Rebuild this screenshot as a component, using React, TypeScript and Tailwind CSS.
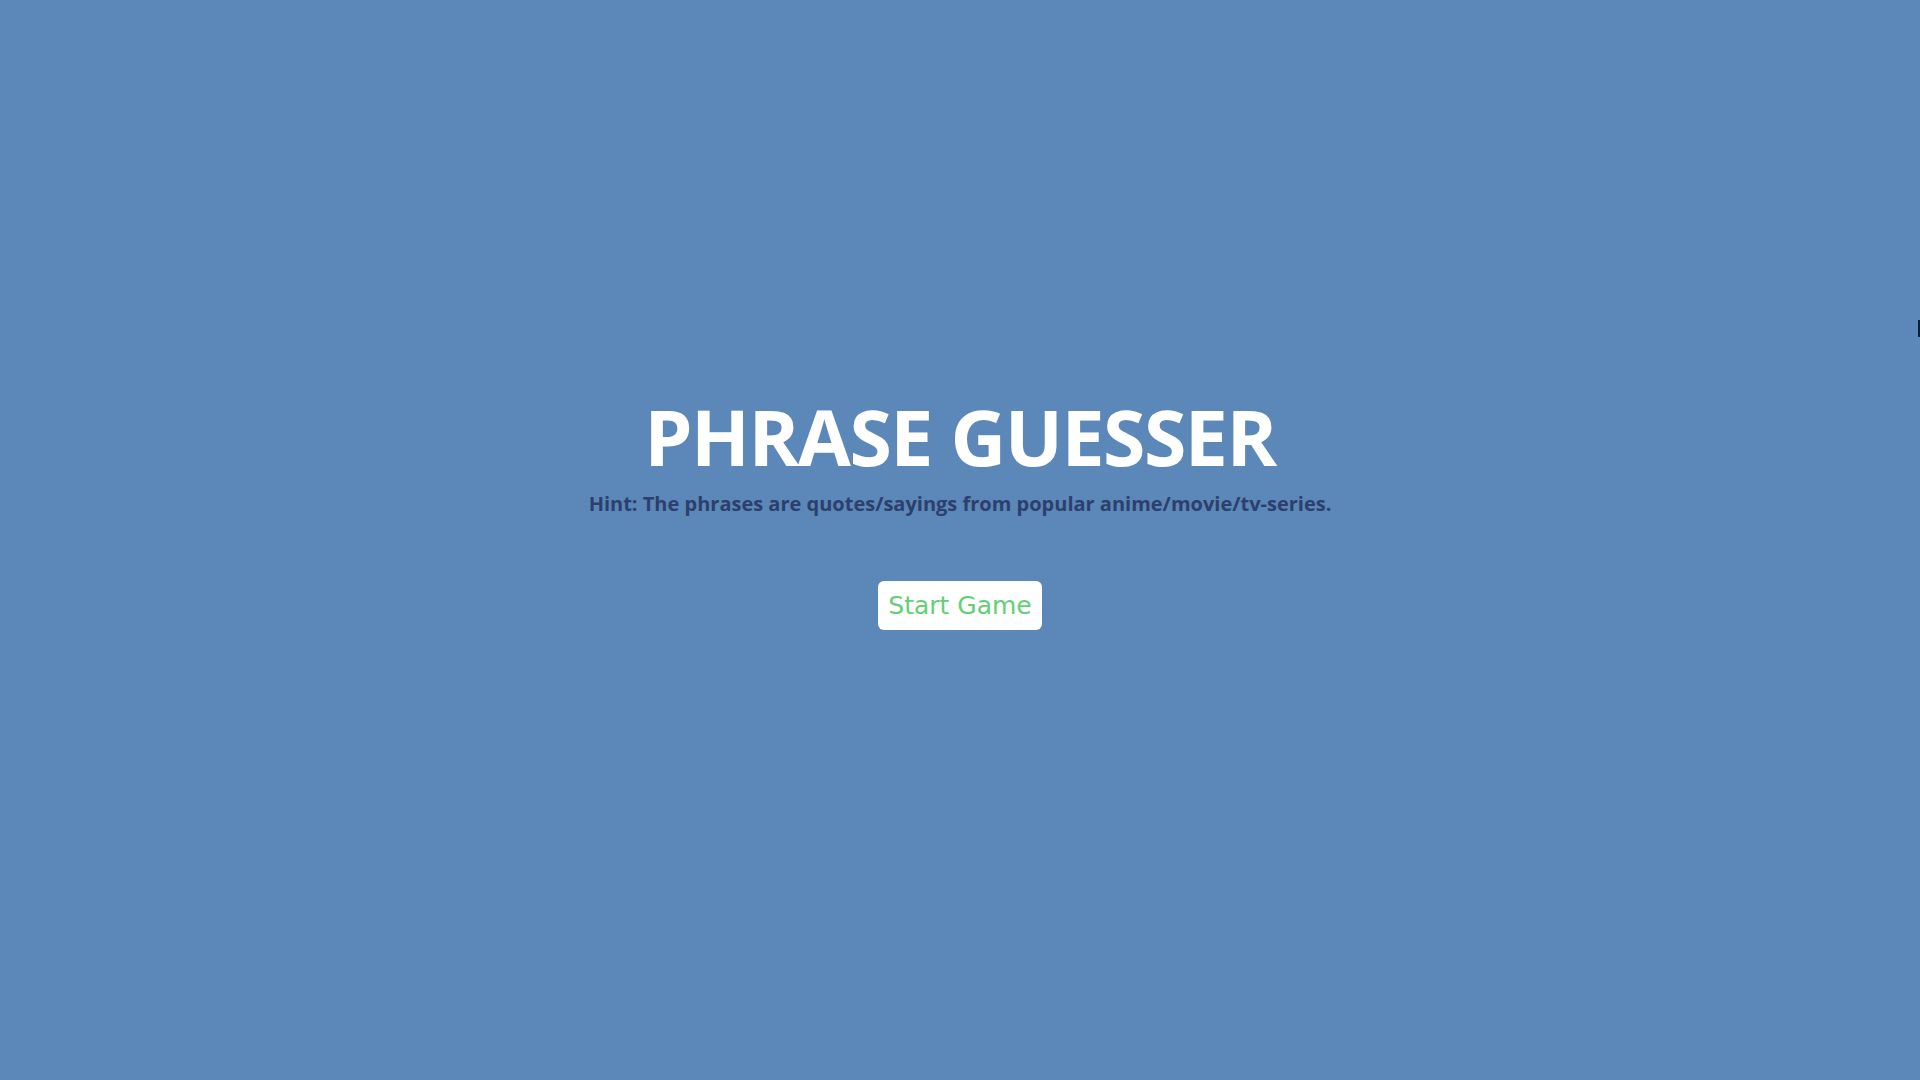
export default function App() {
  return (
    <div className="relative flex h-screen w-full flex-col items-center justify-center bg-[#5b87b9] font-['Open_Sans',sans-serif]">
      <h1 className="m-0 text-[77px] font-bold leading-normal tracking-[-1.5px] text-white">PHRASE GUESSER</h1>
      <p className="m-0 -mt-[6px] text-[20px] font-bold leading-normal text-[#2c3f6d]">
        Hint: The phrases are quotes/sayings from popular anime/movie/tv-series.
      </p>
      <button className="mt-[62px] mb-[71px] rounded-[6px] bg-white px-[10px] py-[10px] font-['DejaVu_Sans',sans-serif] text-[25px] leading-[29px] text-[#63cf77]">
        Start Game
      </button>
      <div className="absolute right-0 top-[320px] h-[17px] w-[2px] bg-[#0f1e35]" />
    </div>
  )
}
